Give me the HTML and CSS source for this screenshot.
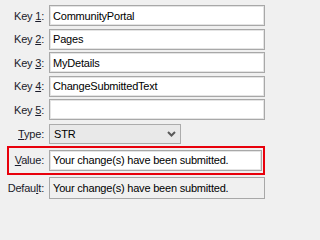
FILE: index.html
```html
<!DOCTYPE html>
<html>
<head>
<meta charset="utf-8">
<link rel="stylesheet" href="styles.css">
</head>
<body>
<div class="form">
  <div class="row"><div class="label">Key <u>1</u>:</div><div class="field">CommunityPortal</div></div>
  <div class="row"><div class="label">Key <u>2</u>:</div><div class="field">Pages</div></div>
  <div class="row"><div class="label">Key <u>3</u>:</div><div class="field">MyDetails</div></div>
  <div class="row"><div class="label">Key <u>4</u>:</div><div class="field">ChangeSubmittedText</div></div>
  <div class="row"><div class="label">Key <u>5</u>:</div><div class="field"></div></div>
  <div class="row row-type"><div class="label"><u>T</u>ype:</div>
    <div class="select"><span>STR</span>
      <svg class="chev" width="9" height="6" viewBox="0 0 9 6"><path d="M1 1 L4.5 4.5 L8 1" fill="none" stroke="#5a5a5a" stroke-width="2"/></svg>
    </div>
  </div>
  <div class="row row-value"><div class="label"><u>V</u>alue:</div><div class="field">Your change(s) have been submitted.</div></div>
  <div class="row row-default"><div class="label">Defau<u>l</u>t:</div><div class="field field-ro">Your change(s) have been submitted.</div></div>
</div>
</body>
</html>
```
FILE: styles.css
```css
html, body {
  margin: 0;
  padding: 0;
  background: #f0f0f0;
  width: 266px;
  height: 202px;
  overflow: hidden;
}
.form {
  display: flex;
  flex-direction: column;
  gap: 2.5px;
  padding: 5px 1px 0 0;
  font-family: "Liberation Sans", Arial, sans-serif;
  font-size: 11px;
  letter-spacing: -0.2px;
}
.row {
  display: grid;
  grid-template-columns: 44px 1fr;
  column-gap: 5px;
  height: 21px;
  align-items: center;
}
.label {
  text-align: right;
  color: #1a1a2a;
  white-space: nowrap;
}
.label u {
  text-decoration-thickness: 1px;
  text-underline-offset: 1px;
}
.field {
  box-sizing: border-box;
  height: 21px;
  border: 1px solid #a8a8a8;
  box-shadow: inset 0 0 0 1px #e4e4e4;
  background: #ffffff;
  color: #000;
  padding: 0 3px;
  display: flex;
  align-items: center;
  white-space: nowrap;
  overflow: hidden;
}
.field-ro {
  background: #f0f0f0;
  box-shadow: none;
}
.row-type {
  height: 20px;
  margin-top: 1px;
}
.select {
  box-sizing: border-box;
  width: 132px;
  height: 20px;
  border: 1px solid #acacac;
  background: #e9e9e9;
  color: #000;
  padding: 0 4px 0 4px;
  display: flex;
  align-items: center;
  justify-content: space-between;
}
.chev {
  display: block;
}
.row-value {
  height: 29px;
  box-sizing: border-box;
  margin-left: 7px;
  margin-top: -0.5px;
  border: 2px solid #e8000b;
  padding: 0 1px 0 0;
  grid-template-columns: 35px 1fr;
}
.row-default {
  margin-top: -0.5px;
  height: 22px;
}
.row-default .field {
  height: 22px;
}
```
